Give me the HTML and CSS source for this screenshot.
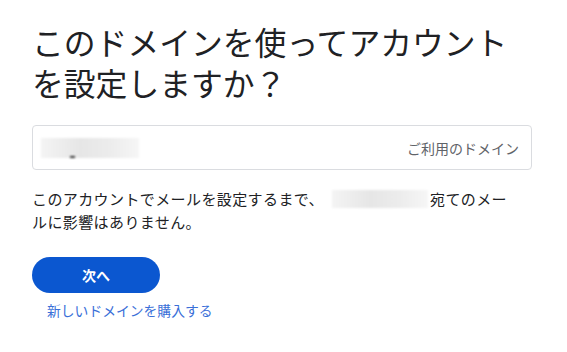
FILE: index.html
```html
<!DOCTYPE html>
<html lang="ja">
<head>
    <meta charset="UTF-8">
    <meta name="viewport" content="width=device-width, initial-scale=1.0">
    <title>ドメインの設定</title>
    <link rel="stylesheet" href="styles.css">
</head>
<body>

<div class="page">
    <h1>このドメインを使ってアカウントを設定しますか？</h1>

    <div class="domain-field">
        <span class="blurred field-value"><span class="dash"></span></span>
        <span class="field-hint">ご利用のドメイン</span>
    </div>

    <p class="note">このアカウントでメールを設定するまで、<span class="blurred inline-blur"></span>宛てのメールに影響はありません。</p>

    <button class="btn">次へ</button>
    <a class="link" href="#">新しいドメインを購入する</a>
</div>

</body>
</html>
```

FILE: styles.css
```css
body {
    font-family: "Noto Sans CJK JP", "Noto Sans", sans-serif;
    margin: 0;
    padding: 0;
    background-color: #fff;
    color: #202124;
}

.page {
    width: 500px;
    padding: 21px 0 0 32px;
}

h1 {
    font-size: 31.8px;
    font-weight: 400;
    line-height: 41px;
    margin: 0 0 22px 0;
    letter-spacing: 0;
}

.domain-field {
    display: flex;
    align-items: center;
    justify-content: space-between;
    height: 43px;
    border: 1px solid #dadce0;
    border-radius: 4px;
    padding: 0 12px 0 8px;
}

.blurred {
    display: inline-block;
    background: linear-gradient(90deg, #f4f4f4, #e6e6e6 40%, #ececec 70%, #f6f6f6);
    filter: blur(1px);
}

.field-value {
    position: relative;
    width: 98px;
    height: 20px;
}

.dash {
    position: absolute;
    left: 29px;
    bottom: 0;
    width: 5px;
    height: 2px;
    background-color: #333;
}

.field-hint {
    font-size: 14px;
    color: #5f6368;
}

.note {
    font-size: 15px;
    letter-spacing: 0.4px;
    line-height: 23px;
    margin: 17px 0 0 0;
    width: 480px;
}

.inline-blur {
    width: 96px;
    height: 18px;
    vertical-align: -3px;
    margin: 0 2px 0 8px;
}

.btn {
    display: block;
    width: 128px;
    height: 36px;
    margin-top: 24px;
    background-color: #0b57d0;
    color: #fff;
    border: none;
    border-radius: 18px;
    font-family: inherit;
    font-size: 14px;
    font-weight: 700;
    cursor: pointer;
}

.link {
    display: inline-block;
    margin: 7px 0 0 15px;
    font-size: 13.8px;
    color: #3a6fd8;
    text-decoration: none;
}
```
